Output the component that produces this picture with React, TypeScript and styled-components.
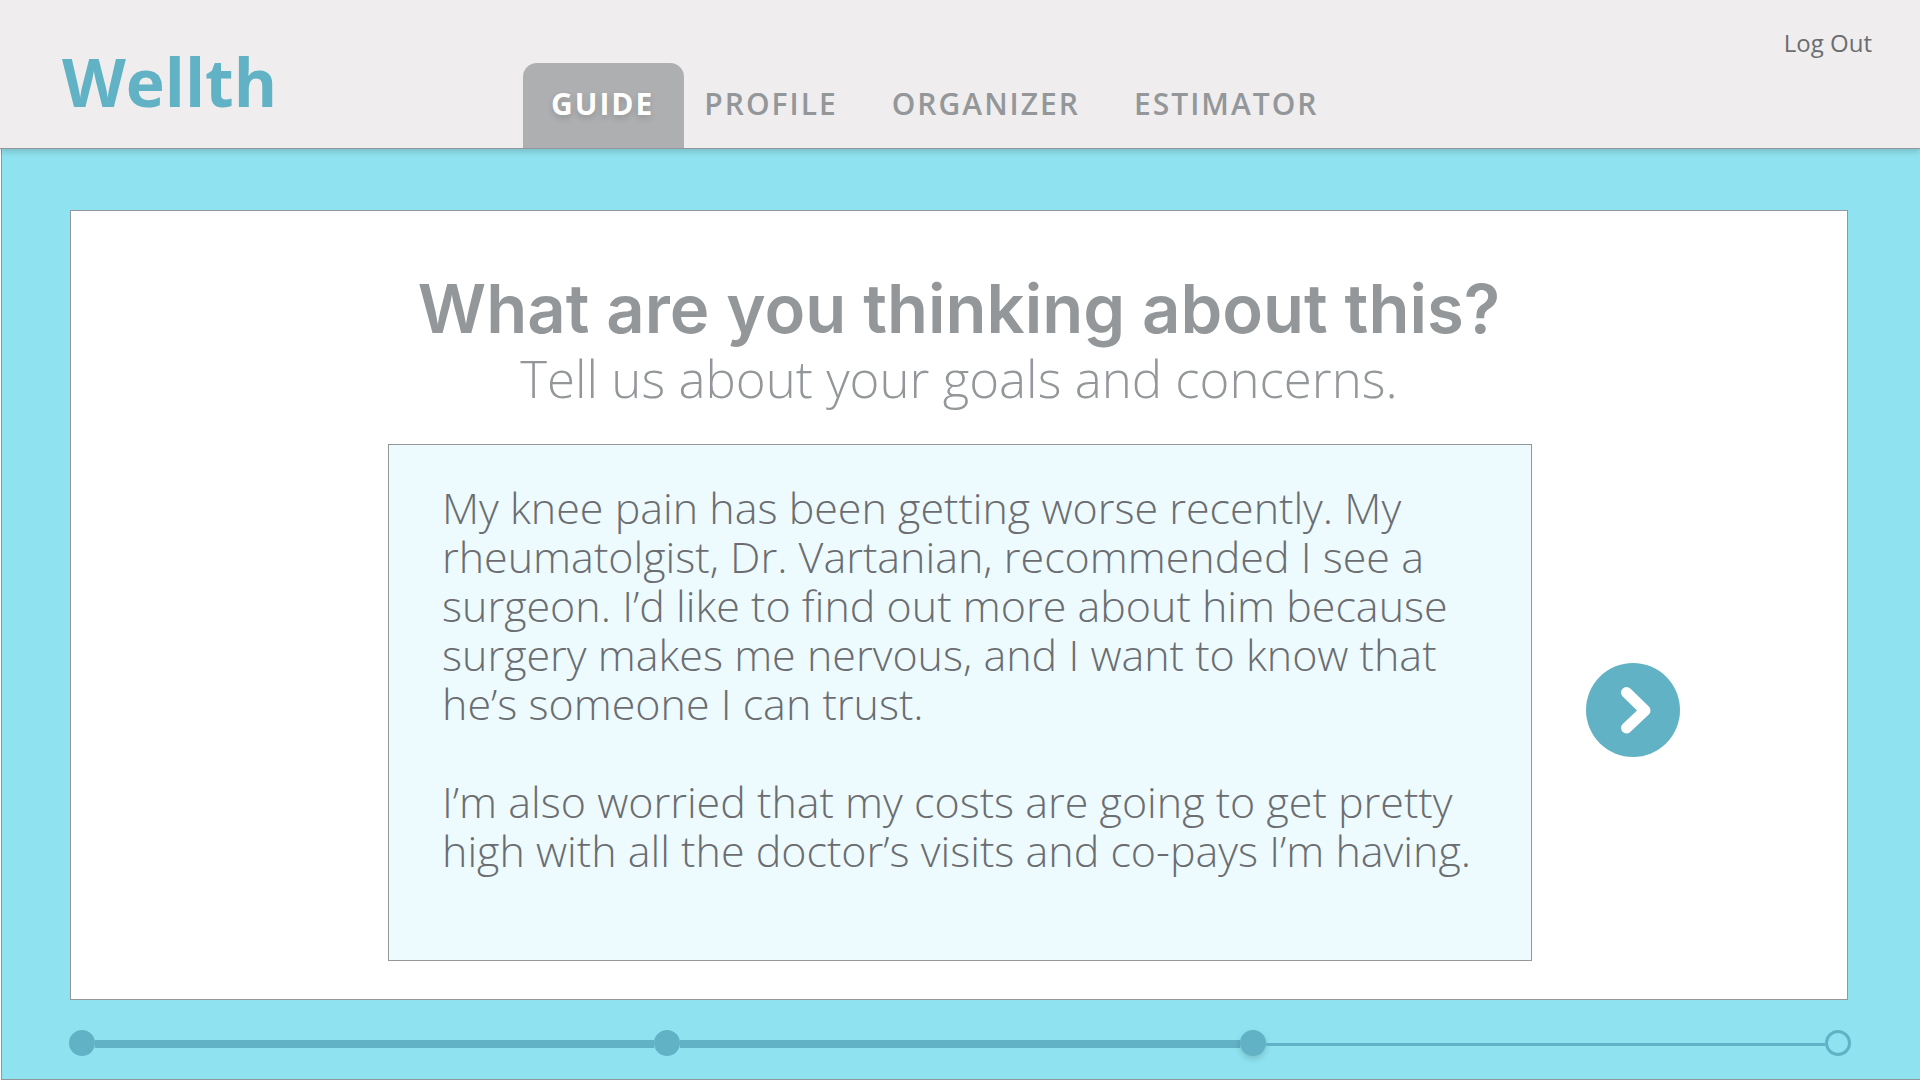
import React, { useState } from "react";
import styled, { createGlobalStyle, css } from "styled-components";

const color = {
  bar: "#efedee",
  line: "#939799",
  tab: "#aeafb1",
  teal: "#61b2c4",
  sky: "#8fe3f0",
  field: "#edfbff",
  ink: "#6b6d70",
};

const shadow = "0 3px 6px rgba(0, 0, 0, 0.16)";
const display = `Inter, "Liberation Sans", sans-serif`;
const body = `"Open Sans", "Liberation Sans", sans-serif`;

const GlobalStyle = createGlobalStyle`
  *, *::before, *::after { box-sizing: border-box; }
  body { margin: 0; background: #fff; font-family: ${body}; }
  h1, p { margin: 0; }
`;

const Page = styled.div`
  min-height: 100vh;
  display: flex;
  flex-direction: column;
`;

const Header = styled.header`
  position: relative;
  z-index: 1;
  display: grid;
  grid-template-columns: 461px 1fr auto;
  height: 149px;
  padding: 0 48px 0 62px;
  background: ${color.bar};
  border-bottom: 1px solid ${color.line};
  box-shadow: ${shadow};
`;

const Logo = styled.a`
  padding-top: 45px;
  color: ${color.teal};
  font: 700 66px/72px ${body};
  text-decoration: none;
`;

const Nav = styled.nav`
  display: flex;
  align-items: flex-end;
  gap: 54px;
`;

const Tab = styled.a<{ $active?: boolean }>`
  height: 85px;
  color: ${color.line};
  font: 600 30px/82px ${body};
  letter-spacing: 2px;
  text-decoration: none;

  ${(p) =>
    p.$active &&
    css`
      margin-right: -34px;
      padding: 0 30px 0 28px;
      border-radius: 14px 14px 0 0;
      background: ${color.tab};
      color: #fff;
      font-weight: 700;
      text-shadow: ${shadow};
    `}
`;

const LogOut = styled.a`
  padding-top: 27px;
  color: ${color.ink};
  font: 400 24px/32px ${body};
  text-decoration: none;
`;

const Main = styled.main`
  flex: 1;
  margin-left: 1px;
  padding: 61px 72px 23px 68px;
  background: ${color.sky};
  border-left: 1px solid ${color.line};
  border-bottom: 1px solid ${color.line};
`;

const Card = styled.section`
  padding: 62px 0 38px;
  background: #fff;
  border: 1px solid ${color.line};
  text-align: center;
`;

const Title = styled.h1`
  color: ${color.line};
  font: 600 67px/72px ${display};
`;

const Subtitle = styled.p`
  color: ${color.line};
  font: 300 51px/66px ${body};
`;

const AnswerRow = styled.div`
  display: grid;
  grid-template-columns: 1fr minmax(0, 1144px) 1fr;
  align-items: center;
  margin-top: 33px;
  padding-left: 2px;
`;

const Answer = styled.textarea`
  grid-column: 2;
  display: block;
  width: 100%;
  height: 517px;
  padding: 38px 53px;
  border: 1px solid ${color.line};
  border-radius: 0;
  outline: none;
  resize: none;
  overflow: hidden;
  background: ${color.field};
  color: ${color.ink};
  font: 300 43px/49px ${body};
`;

const NextButton = styled.button`
  justify-self: start;
  margin: 14px 0 0 54px;
  width: 94px;
  height: 94px;
  padding: 0;
  border: 0;
  border-radius: 50%;
  background: ${color.teal};
  cursor: pointer;

  svg {
    display: block;
  }
`;

const Stepper = styled.ol`
  display: flex;
  align-items: center;
  margin: 30px -3px 0 -1px;
  padding: 0;
  list-style: none;
`;

const Step = styled.li<{ $open?: boolean; $current?: boolean }>`
  flex: none;
  width: 26px;
  height: 26px;
  border: 3px solid ${color.teal};
  border-radius: 50%;
  background: ${(p) => (p.$open ? "transparent" : color.teal)};
  box-shadow: ${(p) => (p.$current ? shadow : "none")};
`;

const Track = styled.li<{ $ahead?: boolean }>`
  flex: 1;
  height: ${(p) => (p.$ahead ? 3 : 8)}px;
  margin-top: 2px;
  background: ${color.teal};
`;

const initialAnswer = `My knee pain has been getting worse recently. My rheumatolgist, Dr. Vartanian, recommended I see a surgeon. I’d like to find out more about him because surgery makes me nervous, and I want to know that he’s someone I can trust.

I’m also worried that my costs are going to get pretty high with all the doctor’s visits and co-pays I’m having.`;

const tabs = ["GUIDE", "PROFILE", "ORGANIZER", "ESTIMATOR"];

export default function App() {
  const [answer, setAnswer] = useState(initialAnswer);

  return (
    <Page>
      <GlobalStyle />
      <Header>
        <Logo href="#home">Wellth</Logo>
        <Nav>
          {tabs.map((name, i) => (
            <Tab key={name} href={`#${name.toLowerCase()}`} $active={i === 0}>
              {name}
            </Tab>
          ))}
        </Nav>
        <LogOut href="#logout">Log Out</LogOut>
      </Header>
      <Main>
        <Card>
          <Title id="question">What are you thinking about this?</Title>
          <Subtitle>Tell us about your goals and concerns.</Subtitle>
          <AnswerRow>
            <Answer
              aria-labelledby="question"
              spellCheck={false}
              value={answer}
              onChange={(e) => setAnswer(e.target.value)}
            />
            <NextButton type="button" aria-label="Next">
              <svg width="94" height="94" viewBox="0 0 94 94" fill="none">
                <path
                  d="M40.5 29.5 L59 47.5 L40.5 65"
                  stroke="#fff"
                  strokeWidth="11"
                  strokeLinecap="round"
                  strokeLinejoin="round"
                />
              </svg>
            </NextButton>
          </AnswerRow>
        </Card>
        <Stepper>
          <Step />
          <Track aria-hidden />
          <Step />
          <Track aria-hidden />
          <Step $current aria-current="step" />
          <Track $ahead aria-hidden />
          <Step $open />
        </Stepper>
      </Main>
    </Page>
  );
}
